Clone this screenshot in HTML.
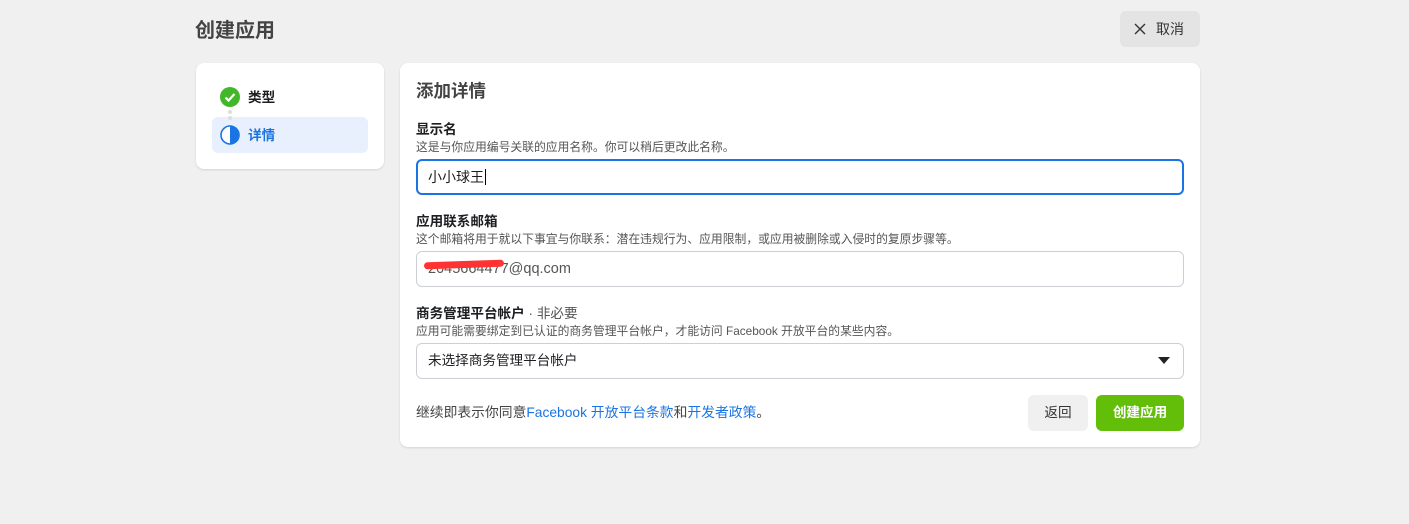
<!DOCTYPE html>
<html><head><meta charset="utf-8"><style>
*{box-sizing:border-box;margin:0;padding:0}
body{width:1409px;height:524px;background:#f0f0f0;font-family:"Liberation Sans","Noto Sans CJK SC",sans-serif;color:#1c1e21;position:relative;overflow:hidden}
.abs{position:absolute}
h1{position:absolute;left:195px;top:14px;font-size:20px;font-weight:bold;color:#444}
.cancel{left:1120px;top:11px;width:80px;height:36px;background:#e4e4e4;border-radius:6px;font-size:14px;color:#333}
.card{background:#fff;border-radius:8px;box-shadow:0 1px 2px rgba(0,0,0,.12)}
.lbl{font-size:13.6px;font-weight:bold;color:#1c1e21}
.sub{font-size:11.8px;color:#555}
.inp{left:416px;width:768px;height:36px;border:1px solid #ccd0d5;border-radius:6px;font-size:14px;padding:0 11px;line-height:34px;color:#1c1e21}
</style></head><body>
<h1>创建应用</h1>
<div class="abs cancel"><svg class="abs" style="left:14px;top:12px" width="12" height="12"><path d="M1 1L11 11M11 1L1 11" stroke="#333" stroke-width="1.4"/></svg><span class="abs" style="left:36px;top:8px">取消</span></div>

<div class="abs card" style="left:196px;top:63px;width:188px;height:106px"></div>
<svg class="abs" style="left:220px;top:87px" width="20" height="20"><circle cx="10" cy="10" r="10" fill="#42b72a"/><path d="M5.5 10.5l3 3 6-6.5" stroke="#fff" stroke-width="2.2" fill="none"/></svg>
<span class="abs" style="left:248px;top:86px;font-size:13.6px;font-weight:bold">类型</span>
<div class="abs" style="left:228px;top:110px;width:4px;height:4px;border-radius:2px;background:#ddd"></div>
<div class="abs" style="left:212px;top:117px;width:156px;height:36px;background:#e7f0fc;border-radius:6px"></div>
<div class="abs" style="left:228px;top:116px;width:4px;height:4px;border-radius:2px;background:#ddd"></div>
<svg class="abs" style="left:220px;top:125px" width="20" height="20"><circle cx="10" cy="10" r="9" fill="#fff" stroke="#1b74e4" stroke-width="1.6"/><path d="M10 1a9 9 0 0 1 0 18z" fill="#1b74e4"/></svg>
<span class="abs" style="left:248px;top:124px;font-size:13.6px;font-weight:bold;color:#1b74e4">详情</span>

<div class="abs card" style="left:400px;top:63px;width:800px;height:384px"></div>
<div class="abs" style="left:416px;top:78px;font-size:17.5px;font-weight:bold;color:#444">添加详情</div>
<div class="abs lbl" style="left:416px;top:118px">显示名</div>
<div class="abs sub" style="left:416px;top:138px">这是与你应用编号关联的应用名称。你可以稍后更改此名称。</div>
<div class="abs inp" style="top:159px;border:2px solid #1b74e4;padding:0 10px;line-height:32px">小小球王<span style="border-left:1px solid #000;margin-left:1px"></span></div>

<div class="abs lbl" style="left:416px;top:210px">应用联系邮箱</div>
<div class="abs sub" style="left:416px;top:230px">这个邮箱将用于就以下事宜与你联系：潜在违规行为、应用限制，或应用被删除或入侵时的复原步骤等。</div>
<div class="abs inp" style="top:251px;color:#555;font-size:14.5px"><span style="color:#555">2045664477</span>@qq.com</div>
<div class="abs" style="left:424px;top:261px;width:80px;height:7px;background:#f33;border-radius:4px;transform:rotate(-2deg)"></div>

<div class="abs lbl" style="left:416px;top:302px">商务管理平台帐户<span style="font-weight:normal;color:#555"> · 非必要</span></div>
<div class="abs sub" style="left:416px;top:322px">应用可能需要绑定到已认证的商务管理平台帐户，才能访问 Facebook 开放平台的某些内容。</div>
<div class="abs inp" style="top:343px;font-size:13.6px">未选择商务管理平台帐户</div>
<svg class="abs" style="left:1158px;top:357px" width="12" height="7"><path d="M0 0h12L6 7z" fill="#222"/></svg>

<div class="abs" style="left:416px;top:401px;font-size:13.8px;color:#444">继续即表示你同意<span style="color:#1b74e4">Facebook 开放平台条款</span>和<span style="color:#1b74e4">开发者政策</span>。</div>
<div class="abs" style="left:1028px;top:395px;width:60px;height:36px;background:#f0f0f0;border-radius:6px;font-size:13.6px;color:#333;text-align:center;line-height:36px">返回</div>
<div class="abs" style="left:1096px;top:395px;width:88px;height:36px;background:#63be09;border-radius:6px;font-size:13.6px;font-weight:bold;color:#fff;text-align:center;line-height:36px">创建应用</div>
</body></html>
